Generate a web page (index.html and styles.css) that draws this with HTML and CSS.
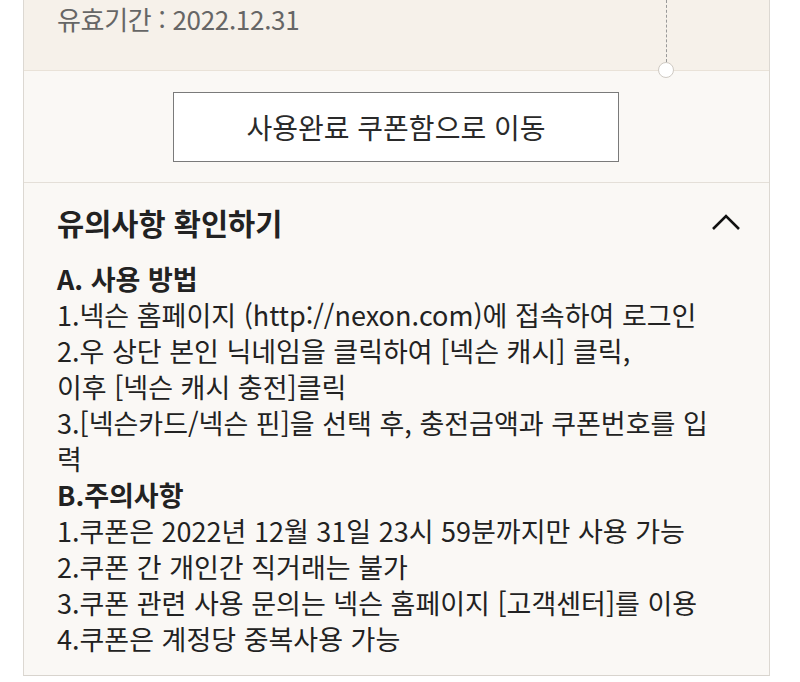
FILE: index.html
```html
<!DOCTYPE html>
<html lang="ko">
<head>
<meta charset="utf-8">
<link rel="stylesheet" href="styles.css">
</head>
<body>
<div class="card">
  <div class="coupon-top">
    <p class="expire">유효기간 : 2022.12.31</p>
    <span class="dash"></span>
    <span class="hole"></span>
  </div>
  <div class="btn-area">
    <a class="btn">사용완료 쿠폰함으로 이동</a>
  </div>
  <div class="notice">
    <div class="notice-head">
      <h2>유의사항 확인하기</h2>
      <svg class="chev" width="30" height="18" viewBox="0 0 30 18"><path d="M2 16 L15 3 L28 16" fill="none" stroke="#111" stroke-width="2.6"/></svg>
    </div>
    <div class="notice-body">
      <h3>A. 사용 방법</h3>
      <p>1.넥슨 홈페이지 (http://nexon.com)에 접속하여 로그인</p>
      <p>2.우 상단 본인 닉네임을 클릭하여 [넥슨 캐시] 클릭,<br>이후 [넥슨 캐시 충전]클릭</p>
      <p>3.[넥슨카드/넥슨 핀]을 선택 후, 충전금액과 쿠폰번호를 입<br>력</p>
      <h3>B.주의사항</h3>
      <p>1.쿠폰은 2022년 12월 31일 23시 59분까지만 사용 가능</p>
      <p>2.쿠폰 간 개인간 직거래는 불가</p>
      <p>3.쿠폰 관련 사용 문의는 넥슨 홈페이지 [고객센터]를 이용</p>
      <p>4.쿠폰은 계정당 중복사용 가능</p>
    </div>
  </div>
</div>
</body>
</html>
```
FILE: styles.css
```css
html, body {
  margin: 0;
  padding: 0;
  background: #ffffff;
}
body {
  font-family: "Noto Sans CJK KR", "Noto Sans", sans-serif;
  color: #222;
  width: 800px;
  height: 682px;
  overflow: hidden;
}
.card {
  margin-left: 23px;
  width: 745px;
  border-left: 1px solid #dcd8d2;
  border-right: 1px solid #dcd8d2;
  border-bottom: 1px solid #d8d4ce;
  background: #faf8f5;
}
.coupon-top {
  position: relative;
  height: 70px;
  background: #f6f1ea;
  border-bottom: 1px solid #e9e2d8;
}
.expire {
  margin: 0;
  padding: 2px 0 0 33px;
  font-size: 26px;
  line-height: 34px;
  color: #666;
  letter-spacing: -0.3px;
}
.dash {
  position: absolute;
  left: 642px;
  top: 0;
  height: 62px;
  border-left: 1.5px dashed #999;
}
.hole {
  position: absolute;
  left: 634px;
  top: 62px;
  width: 16px;
  height: 16px;
  border-radius: 50%;
  background: #fff;
  border: 1px solid #cfcac3;
  box-sizing: border-box;
}
.btn-area {
  display: flex;
  justify-content: center;
  padding: 21px 150px 20px 150px;
  border-bottom: 1px solid #e4dfd8;
}
.btn {
  display: flex;
  align-items: center;
  justify-content: center;
  width: 446px;
  height: 70px;
  box-sizing: border-box;
  border: 1.5px solid #7a7a7a;
  background: #fff;
  font-size: 28px;
  color: #2a2a2a;
  margin-left: -1px;
}
.notice {
  padding: 0 0 18px 33px;
}
.notice-head {
  display: flex;
  align-items: center;
  justify-content: space-between;
  height: 78px;
  padding-right: 28px;
}
.notice-head h2 {
  margin: 0;
  font-size: 29.5px;
  font-weight: 700;
  color: #222;
}
.notice-body h3 {
  margin: 0;
  font-size: 27px;
  font-weight: 700;
  line-height: 36px;
}
.notice-body p {
  margin: 0;
  font-size: 27px;
  line-height: 36px;
  color: #222;
}
```
